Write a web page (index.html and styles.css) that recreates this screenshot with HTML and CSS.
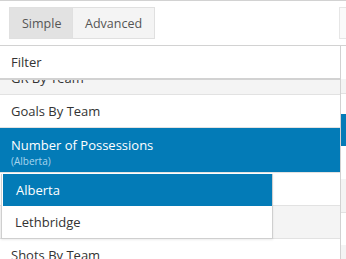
FILE: index.html
```
<!DOCTYPE html>
<html lang="en">
<head>
    <meta charset="UTF-8">
    <meta name="viewport" content="width=device-width, initial-scale=1.0">
    <title>Chart Picker</title>
    <link rel="stylesheet" href="styles.css">
</head>
<body>
    <!-- Mode tabs -->
    <div class="tabs-bar">
        <div class="tabs">
            <button class="tab active">Simple</button>
            <button class="tab">Advanced</button>
        </div>
        <div class="tab-stub"></div>
    </div>

    <div class="body-grid">
        <div class="main">
            <div class="filter">Filter</div>

            <!-- Chart list (scrolled a little) -->
            <div class="list-view">
                <div class="list">
                    <div class="row odd">GR By Team</div>
                    <div class="row">Goals By Team</div>
                    <div class="row odd selected">
                        <div>Number of Possessions</div>
                        <div class="sub">(Alberta)</div>
                    </div>
                    <div class="row"></div>
                    <div class="row odd"></div>
                    <div class="row">Shots By Team</div>
                </div>

                <!-- Team dropdown -->
                <div class="dropdown">
                    <div class="option active">Alberta</div>
                    <div class="option">Lethbridge</div>
                </div>
            </div>
        </div>

        <div class="side">
            <div class="side-band b1"></div>
            <div class="side-band b2"></div>
            <div class="side-band b3"></div>
            <div class="thumb"></div>
        </div>
    </div>
</body>
</html>
```

FILE: styles.css
```
:root {
    --blue: #037bb7;
    --line: #d2d2d2;
    --row-line: #e2e2e2;
    --stripe: #f4f4f4;
    --text: #333;
}

body {
    margin: 0;
    font-family: 'Open Sans', sans-serif;
    font-size: 13px;
    color: var(--text);
    background: white;
    overflow: hidden;
}

/* Tabs */
.tabs-bar {
    display: flex;
    justify-content: space-between;
    border-top: 1px solid var(--line);
    border-bottom: 1px solid var(--line);
    padding: 6px 0 0 9px;
    box-sizing: border-box;
    height: 46px;
}

.tabs {
    display: flex;
    height: 32px;
}

.tab {
    font-family: 'Open Sans', sans-serif;
    font-size: 12.5px;
    color: #555;
    background: var(--stripe);
    border: 1px solid #e0e0e0;
    padding: 0 12px;
    margin: 0;
    cursor: pointer;
}

.tab + .tab {
    border-left: none;
}

.tab.active {
    background: #e2e2e2;
    width: 64px;
}

.tab-stub {
    width: 7px;
    height: 32px;
    background: #fafafa;
    border: 1px solid #e6e6e6;
    border-right: none;
    box-sizing: border-box;
}

/* Main + right strip */
.body-grid {
    display: grid;
    grid-template-columns: 341px 1fr;
}

.main {
    border-right: 1px solid var(--line);
}

.filter {
    height: 32px;
    line-height: 32px;
    padding-left: 11px;
    border-bottom: 2px solid var(--line);
}

.list-view {
    position: relative;
    height: 179px;
    overflow: hidden;
}

.list {
    margin-top: -18px;
}

.row {
    height: 32px;
    line-height: 32px;
    padding-left: 11px;
    border-bottom: 1px solid var(--row-line);
    white-space: nowrap;
}

.row.odd {
    background: var(--stripe);
}

.row.selected {
    height: 45px;
    line-height: 18px;
    padding-top: 8px;
    box-sizing: border-box;
    background: var(--blue);
    color: white;
}

.row .sub {
    font-size: 10px;
    line-height: 14px;
    color: #a9d6ee;
}

.dropdown {
    position: absolute;
    left: 1px;
    top: 94px;
    width: 270px;
    background: white;
    border: 1px solid #cfcfcf;
    border-top: none;
    box-shadow: 0 1px 2px rgba(0, 0, 0, 0.08);
}

.option {
    height: 32px;
    line-height: 32px;
    padding-left: 13px;
}

.option.active {
    background: var(--blue);
    color: white;
    margin-left: 1px;
}

/* Right strip */
.side {
    position: relative;
}

.side-band {
    position: absolute;
    left: 0;
    right: 0;
    background: var(--stripe);
    border-bottom: 1px solid var(--row-line);
}

.b1 { top: 33px; height: 14px; }
.b2 { top: 133px; height: 33px; }
.b3 { top: 199px; height: 40px; }

.thumb {
    position: absolute;
    left: 0;
    right: 0;
    top: 68px;
    height: 32px;
    background: var(--blue);
}
```
